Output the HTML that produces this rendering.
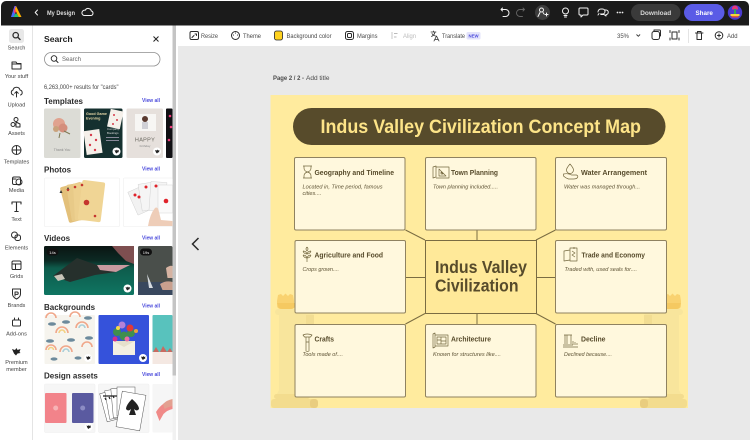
<!DOCTYPE html>
<html lang="en"><head><meta charset="utf-8"><title>Indus Valley Civilization Concept Map</title>
<style>
html,body{margin:0;padding:0;background:#fff;width:750px;height:440px;overflow:hidden}
svg{display:block;font-family:"Liberation Sans",sans-serif;filter:blur(.25px)}
.rl{font-size:5.6px;fill:#444;text-anchor:middle}
.ic{fill:none;stroke:#2c2c2c;stroke-width:1;stroke-linecap:round;stroke-linejoin:round}
.h{font-size:8px;font-weight:700;fill:#2c2c2c}
.va{font-size:5.6px;fill:#4b4bdc;font-weight:700}
.tb{font-size:6.2px;fill:#4a4a4a}
.bx{fill:#fff8dd;stroke:#8f8260;stroke-width:1}
.bh{font-size:7.4px;font-weight:700;fill:#574b2b}
.bt{font-size:5.4px;font-style:italic;fill:#5f5436}
.pi{fill:none;stroke:#74683f;stroke-width:.7;stroke-linejoin:round}
.cn{stroke:#7a6c42;stroke-width:1;fill:none}
.w{fill:none;stroke:#f4f4f4;stroke-width:1;stroke-linecap:round;stroke-linejoin:round}
</style></head><body>
<svg width="750" height="440" viewBox="0 0 750 440" xmlns="http://www.w3.org/2000/svg">
<defs><linearGradient id="tbl" x1="0" y1="0" x2="0" y2="1"><stop offset="0" stop-color="#0a1512"/><stop offset=".3" stop-color="#0c2a24"/><stop offset=".45" stop-color="#0e5c4c"/><stop offset="1" stop-color="#0f7562"/></linearGradient></defs>
<rect width="750" height="440" fill="#fff"/>
<!-- canvas -->
<rect x="178" y="46" width="572" height="394" fill="#e9e9e9"/>
<!-- top bar -->
<rect x="1" y="1" width="748" height="24.5" rx="5" fill="#1b1b1b"/>
<rect x="1" y="15" width="748" height="10.5" fill="#1b1b1b"/>
<path d="M11 17 L16 6 L21 17 L18.5 17 L16 11.5 L13.5 17 Z" fill="#ff3b6a"/>
<path d="M11 17 L13.5 11.5 L16 6 L14.5 6 Z" fill="#7a5cff"/>
<path d="M16 6 L21.5 17 L18.5 17 L15 9Z" fill="#ffb000"/>
<path d="M13 17 L16 13 L19 17 Z" fill="#25c26e"/>
<path d="M11 17 L13.5 11 L15 14 L13.5 17Z" fill="#3f6cff"/>
<path class="w" d="M37.5 10 L35.2 12.5 L37.5 15" stroke-width="1.2"/>
<text x="47" y="15" font-size="6.6" font-weight="700" fill="#ddd" textLength="28" lengthAdjust="spacingAndGlyphs">My Design</text>
<path class="w" d="M84 15.5 h7 a2.3 2.3 0 0 0 .3 -4.5 a3.2 3.2 0 0 0 -6 -.8 a2.7 2.7 0 0 0 -1.3 5.3z" stroke-width=".8"/>
<path class="w" d="M502.5 9.500 L501 8 L502.5 6.500 M501 8 H505.500 a3.500 3.500 0 0 1 0 7 H503" transform="translate(0,1.500)" stroke-width=".9"/>
<path d="M523 9.500 L524.500 8 L523 6.500 M524.500 8 H520 a3.500 3.500 0 0 0 0 7 H522.500" transform="translate(0,1.500)" fill="none" stroke="#666" stroke-width=".9" stroke-linecap="round"/>
<circle cx="542.5" cy="12.5" r="7.500" fill="#3d3d3d"/>
<circle cx="541.5" cy="10" r="2" class="w"/><path class="w" d="M538 16.5 L540 12.5 M543 12.5 L544 14 M545 14.5 h3 M546.5 13 v3"/>
<circle cx="565.5" cy="11" r="3" class="w"/><path class="w" d="M564 15.5 h3 M564.5 17 h2"/>
<path class="w" d="M580 8 h7 a1 1 0 0 1 1 1 v5 a1 1 0 0 1 -1 1 h-4 l-2 2 v-2 h-1 a1 1 0 0 1 -1 -1 v-5 a1 1 0 0 1 1 -1z"/>
<path class="w" d="M598 12 a3 3 0 0 1 3 -3 h1.5 a2.5 2.5 0 0 1 0 5 h-2 M605 10 h1 a2 2 0 0 1 0 4.5 v1.5 l-2 -1.5 h-3 M598 15 l1 -1.5"/>
<circle cx="617.5" cy="12.5" r=".9" fill="#eee"/><circle cx="620" cy="12.5" r=".9" fill="#eee"/><circle cx="622.5" cy="12.5" r=".9" fill="#eee"/>
<rect x="631" y="4" width="49.5" height="17" rx="8.5" fill="#3a3a3a"/>
<text x="655.7" y="15" font-size="6.6" font-weight="700" fill="#d8d8d8" text-anchor="middle" textLength="31" lengthAdjust="spacingAndGlyphs">Download</text>
<rect x="684" y="4" width="40.5" height="17" rx="8.5" fill="#5a5be6"/>
<text x="704.2" y="15" font-size="6.6" font-weight="700" fill="#fff" text-anchor="middle" textLength="17.5" lengthAdjust="spacingAndGlyphs">Share</text>
<circle cx="735" cy="12.5" r="7.200" fill="#4b3bd0"/>
<path d="M732 8.5 a3 3 0 0 1 6 0 v1 h-6z" fill="#e6387a"/><rect x="734" y="9" width="2" height="5" fill="#2ea85a"/><rect x="730.5" y="14" width="9" height="2" fill="#f4d23a"/><rect x="731.5" y="16" width="7" height="1.5" fill="#e65a3a"/>
<!-- left rail -->
<rect x="32" y="25.5" width="1" height="415" fill="#e4e4e4"/>
<rect x="9" y="29" width="15" height="14" rx="2.5" fill="#e8e8e8"/>
<g class="ic" stroke-width=".9">
<circle cx="15.7" cy="35.2" r="2.7" stroke-width="1.3"/><path d="M17.8 37.3 L20 39.5" stroke-width="1.4"/>
<path d="M12 62 h4 l1 1.5 h4 v5.5 h-9z M12 64 h9"/>
<path d="M13.5 95 a2.600 2.600 0 0 1 -.5 -5 a3.600 3.600 0 0 1 7 0 a2.600 2.600 0 0 1 .5 5 M16.500 97 v-5.500 l-1.800 1.800 M16.500 91.500 l1.800 1.800"/>
<circle cx="16" cy="119.5" r="2"/><circle cx="13" cy="124.5" r="2"/><path d="M16 122 l4 2 v3 h-4z"/>
<circle cx="16.5" cy="150" r="4.5"/><path d="M12 150 h9 M16.5 146 v8"/>
<rect x="12.5" y="177" width="8" height="7.5" rx="1.5"/><circle cx="19" cy="182" r="3"/><path d="M13 179 h3"/>
<path d="M16.5 211.5 v-9.5 M12 204 v-2 h9 v2 M14.8 211.5 h3.4" stroke-width="1.1"/>
<circle cx="14.5" cy="235" r="3"/><rect x="15" y="235" width="5.5" height="5.5" rx="2"/>
<rect x="12" y="261" width="9" height="8.5" rx="1.3"/><path d="M12 264 h9 M15.5 264 v5.5"/>
<path d="M12.5 289 h8 v5 q0 3 -4 5 q-4 -2 -4 -5z M15 296 v-4 h2 a1.2 1.2 0 0 1 0 2.4 h-2"/>
<rect x="12.5" y="320" width="8" height="6" rx="1"/><path d="M14.5 320 v-2 M18.5 320 v-2"/>
</g>
<path d="M12 349 l3 1 l1.5 -2 l1 2 l3 -1 l-1 3 l1 1 l-3 .5 l-1.5 2 l-2 -2 z" fill="#222"/>
<text class="rl" x="16.5" y="49.5">Search</text>
<text class="rl" x="16.5" y="78">Your stuff</text>
<text class="rl" x="16.5" y="106.5">Upload</text>
<text class="rl" x="16.5" y="135">Assets</text>
<text class="rl" x="16.5" y="163.5">Templates</text>
<text class="rl" x="16.5" y="192">Media</text>
<text class="rl" x="16.5" y="221">Text</text>
<text class="rl" x="16.5" y="249.5">Elements</text>
<text class="rl" x="16.5" y="278">Grids</text>
<text class="rl" x="16.5" y="307">Brands</text>
<text class="rl" x="16.5" y="335.5">Add-ons</text>
<text class="rl" x="16.5" y="364">Premium</text>
<text class="rl" x="16.5" y="371">member</text>
<!-- scrollbar -->
<rect x="172.5" y="25.5" width="3.5" height="415" fill="#f1f1f1"/>
<rect x="172.5" y="25.5" width="3.5" height="350" fill="#c4c4c4"/>
<!-- search panel -->
<text x="44" y="42" font-size="8.6" font-weight="700" fill="#1f1f1f">Search</text>
<path d="M153.5 36.5 l5 5 M158.5 36.5 l-5 5" stroke="#222" stroke-width="1"/>
<rect x="44.5" y="52.5" width="115.5" height="13.5" rx="6.7" fill="#fff" stroke="#8e8e8e" stroke-width=".8"/>
<circle cx="54" cy="58.5" r="2.8" fill="none" stroke="#222" stroke-width=".9"/><path d="M56 60.5 l2.3 2.3" stroke="#222" stroke-width="1"/>
<text x="62" y="61" font-size="6" fill="#666">Search</text>
<text x="44" y="89" font-size="6" fill="#444" textLength="74.5" lengthAdjust="spacingAndGlyphs">6,263,000+ results for "cards"</text>
<text class="h" x="44" y="104">Templates</text><text class="va" x="142" y="102" textLength="18" lengthAdjust="spacingAndGlyphs">View all</text>
<text class="h" x="44" y="172.5">Photos</text><text class="va" x="142" y="170.5" textLength="18" lengthAdjust="spacingAndGlyphs">View all</text>
<text class="h" x="44" y="241">Videos</text><text class="va" x="142" y="239.5" textLength="18" lengthAdjust="spacingAndGlyphs">View all</text>
<text class="h" x="44" y="310">Backgrounds</text><text class="va" x="142" y="307.5" textLength="18" lengthAdjust="spacingAndGlyphs">View all</text>
<text class="h" x="44" y="378.5">Design assets</text><text class="va" x="142" y="376" textLength="18" lengthAdjust="spacingAndGlyphs">View all</text>
<!-- template thumbs -->
<rect x="44" y="108.5" width="36.5" height="49.5" rx="1.5" fill="#dcdcd6"/>
<circle cx="59" cy="124" r="6" fill="#e0a28f"/><circle cx="63" cy="128" r="4.5" fill="#d48e7c"/><circle cx="56" cy="129" r="3" fill="#c9a27c"/><path d="M64 131 l6 3 M60 133 l-1 5" stroke="#7f7a55" stroke-width="1"/>
<text x="62" y="151" font-size="3.5" fill="#888" text-anchor="middle">Thank You</text>
<rect x="84" y="108.5" width="38.5" height="49.5" rx="1.5" fill="#15302f"/>
<text x="86" y="115" font-size="3.7" font-weight="700" fill="#e8d9a8">Good Game</text><text x="86" y="119.5" font-size="3.7" font-weight="700" fill="#e8d9a8">Evening</text>
<rect x="109" y="110" width="13" height="18" fill="#f5f0ea" transform="rotate(12 115 118)"/><circle cx="114" cy="115" r="1" fill="#d53a4a"/><circle cx="117" cy="120" r="1" fill="#d53a4a"/><circle cx="113" cy="124" r="1" fill="#d53a4a"/>
<rect x="85" y="130" width="16" height="24" fill="#f5f0ea" transform="rotate(-8 93 142)"/><circle cx="91" cy="135" r="1.2" fill="#d53a4a"/><circle cx="96" cy="140" r="1.2" fill="#d53a4a"/><circle cx="90" cy="145" r="1.2" fill="#d53a4a"/><circle cx="95" cy="150" r="1.2" fill="#d53a4a"/>
<text x="107" y="130" font-size="2.8" fill="#ddd">Company</text><text x="107" y="134" font-size="2.8" fill="#ddd">Bookings</text>
<rect x="106" y="137" width="13" height="1" fill="#889"/><rect x="106" y="140" width="13" height="1" fill="#889"/>
<rect x="126.5" y="108.5" width="36.5" height="49.5" rx="1.5" fill="#e6e0dc"/>
<rect x="135" y="114" width="21" height="17" fill="#f7f6f4"/><circle cx="145" cy="119" r="3" fill="#5a3a30"/><rect x="142" y="122" width="6" height="7" fill="#d0d0d6"/>
<text x="145" y="141.5" font-size="5.5" fill="#6a6860" text-anchor="middle" letter-spacing=".3">HAPPY</text>
<text x="145" y="147" font-size="3" fill="#888" text-anchor="middle">birthday</text>
<rect x="166" y="108.5" width="6.5" height="49.5" rx="1" fill="#101014"/>
<circle cx="170" cy="116" r="1.3" fill="#ee3a7a"/><circle cx="171" cy="127" r="1.3" fill="#ee3a7a"/><circle cx="169" cy="140" r="1.3" fill="#ee3a7a"/>
<!-- badges -->
<circle cx="116.5" cy="151.5" r="4" fill="#fff"/><path d="M114.5 150 l1.5 .5 l1 -1 l.5 1 l1.5 -.5 l-.5 1.5 l.5 .5 l-1.5 .5 l-1 1 l-1 -1 z" fill="#222"/>
<circle cx="157" cy="151.5" r="4" fill="#fff"/><path d="M155 150 l1.5 .5 l1 -1 l.5 1 l1.5 -.5 l-.5 1.5 l.5 .5 l-1.5 .5 l-1 1 l-1 -1 z" fill="#222"/>
<!-- photo thumbs -->
<rect x="44.5" y="178" width="75" height="48.5" rx="1" fill="#fff" stroke="#eee" stroke-width=".6"/>
<rect x="64" y="184" width="22" height="37" rx="2" fill="#e3c07a" transform="rotate(-15 75 202)"/>
<rect x="69" y="183" width="22" height="37" rx="2" fill="#e8ca88" transform="rotate(-9 80 202)"/>
<rect x="74" y="183" width="22" height="37" rx="2" fill="#edd08f" transform="rotate(-3 85 202)"/>
<rect x="80" y="181" width="23" height="40" rx="2" fill="#f0d595" transform="rotate(7 91 201)"/>
<path d="M61 190 l1.5 3 h-3z M68 187 l1.5 3 h-3z" fill="#333"/><circle cx="68" cy="190" r="1.2" fill="#c5352e"/><circle cx="75" cy="187" r="1.3" fill="#c5352e"/><circle cx="82" cy="185" r="1.3" fill="#c5352e"/>
<circle cx="86.5" cy="202.5" r="2.8" fill="#c5352e"/><circle cx="95" cy="216" r="1.3" fill="#c5352e"/>
<rect x="123.5" y="178" width="49" height="48.5" rx="1" fill="#fff" stroke="#eee" stroke-width=".6"/>
<rect x="132" y="188" width="16" height="25" fill="#f2f2f2" stroke="#ccc" stroke-width=".4" transform="rotate(-24 140 200)"/>
<rect x="140" y="183" width="16" height="27" fill="#f5f5f5" stroke="#ccc" stroke-width=".4" transform="rotate(-9 148 196)"/>
<rect x="150" y="182" width="16" height="29" fill="#f5f5f5" stroke="#ccc" stroke-width=".4" transform="rotate(4 158 196)"/>
<rect x="158" y="185" width="14.5" height="28" fill="#fafafa" stroke="#ccc" stroke-width=".4"/>
<circle cx="135" cy="195" r="1.5" fill="#e0232b"/><circle cx="139" cy="197" r="1.5" fill="#e0232b"/><circle cx="146" cy="187" r="1.5" fill="#e0232b"/><circle cx="156" cy="186" r="1.5" fill="#e0232b"/><circle cx="166" cy="201" r="2.3" fill="#e0232b"/>
<path d="M148 226 q2 -12 7 -18 q3 -2 4 4 l2 8 l11.5 1 v5z" fill="#eecdb8"/>
<!-- video thumbs -->
<rect x="44" y="246" width="90" height="49" rx="1.5" fill="url(#tbl)"/>
<path d="M53 276 L77 258 L97 265 L130 265 L116 272 L95 275 L70 282 Z" fill="#26302c"/>
<path d="M97 265 L130 265 L116 272 L100 270Z" fill="#c89aa0"/>
<path d="M112 246 h22 v18 l-8 -3 l-8 -8z" fill="#7e4f50"/>
<path d="M54 276 l8 -2 l3 5 l-7 2z" fill="#c9c4b8"/>
<rect x="46.5" y="248.5" width="12" height="7" rx="3.5" fill="#111"/><text x="52.5" y="253.8" font-size="4" fill="#eee" text-anchor="middle">14s</text>
<circle cx="127.5" cy="288.5" r="4" fill="#fff"/><path d="M125.5 287 l1.5 .5 l1 -1 l.5 1 l1.5 -.5 l-.5 1.5 l.5 .5 l-1.5 .5 l-1 1 l-1 -1 z" fill="#222"/>
<rect x="138" y="246" width="34.5" height="49" rx="1.5" fill="#4a4f4b"/>
<rect x="138" y="282" width="34.5" height="13" fill="#39485e"/>
<path d="M147 274 l6 14 h-4z" fill="#d6dbe0"/><path d="M160 284 q6 -4 12.5 -2 v8 h-10z" fill="#c9a08e"/><path d="M166 268 q4 -3 6.5 -2 v12 h-5z" fill="#d6b3a2"/>
<rect x="140" y="248.5" width="12" height="7" rx="3.5" fill="#111"/><text x="146" y="253.8" font-size="4" fill="#eee" text-anchor="middle">19s</text>
<!-- backgrounds -->
<rect x="44.5" y="315" width="50.5" height="49" rx="1" fill="#f6f4ee"/>
<g fill="none" stroke-width="1.6">
<path d="M46 318 a5 5 0 0 1 10 0" stroke="#f0a78a"/><path d="M70 317 a5 5 0 0 1 10 0" stroke="#f0a78a"/>
<path d="M56 333 a6 6 0 0 1 12 0" stroke="#f0a78a"/><path d="M59 333 a3 3 0 0 1 6 0" stroke="#f3d183"/>
<path d="M76 328 a6 6 0 0 1 12 0" stroke="#f0a78a"/><path d="M79 328 a3 3 0 0 1 6 0" stroke="#a9cfd8"/>
<path d="M46 350 a5 5 0 0 1 10 0" stroke="#f0a78a"/><path d="M48.5 350 a2.500 2.500 0 0 1 5 0" stroke="#f3d183"/>
<path d="M60 352 a6 6 0 0 1 12 0" stroke="#f0a78a"/><path d="M63 352 a3 3 0 0 1 6 0" stroke="#a9cfd8"/>
<path d="M82 347 a5 5 0 0 1 10 0" stroke="#f0a78a"/>
</g>
<g fill="#6c8a9c"><ellipse cx="52" cy="324" rx="4" ry="1.800"/><ellipse cx="66" cy="322" rx="4" ry="1.800"/><ellipse cx="88" cy="318" rx="4" ry="1.800"/><ellipse cx="71" cy="340" rx="4" ry="1.800"/><ellipse cx="89" cy="338" rx="4" ry="1.800"/><ellipse cx="50" cy="341" rx="4" ry="1.800"/><ellipse cx="78" cy="358" rx="3.500" ry="1.600"/><ellipse cx="54" cy="359" rx="3.500" ry="1.600"/></g>
<circle cx="88" cy="358" r="4" fill="#fff"/><path d="M86 356.5 l1.5 .5 l1 -1 l.5 1 l1.5 -.5 l-.5 1.5 l.5 .5 l-1.5 .5 l-1 1 l-1 -1 z" fill="#222"/>
<rect x="98.5" y="315" width="50.5" height="49" rx="1" fill="#3552db"/>
<rect x="113" y="341" width="22" height="14" fill="#f3efe2"/><path d="M113 341 l11 6 l11 -6z" fill="#e6e0cc"/>
<circle cx="117" cy="332" r="4" fill="#3f8f4e"/><circle cx="131" cy="333" r="4" fill="#3f8f4e"/><circle cx="124" cy="336" r="4.5" fill="#3f8f4e"/><circle cx="122" cy="325" r="3.5" fill="#b481d8"/><circle cx="130" cy="328" r="3.5" fill="#e23838"/><circle cx="115" cy="339" r="2.5" fill="#d42d8e"/><circle cx="127" cy="339" r="2.5" fill="#ec6fa3"/><circle cx="136" cy="331" r="2" fill="#e8a23a"/><circle cx="118" cy="328" r="2" fill="#f5d74a"/>
<circle cx="143" cy="358" r="4" fill="#fff"/><path d="M141 356.5 l1.5 .5 l1 -1 l.5 1 l1.5 -.5 l-.5 1.5 l.5 .5 l-1.5 .5 l-1 1 l-1 -1 z" fill="#222"/>
<rect x="152.5" y="315" width="20" height="49" rx="1" fill="#58c2bd"/>
<rect x="152.5" y="352" width="20" height="12" fill="#f4e8e2"/><path d="M153 352 l3 -5 l3 5 M160 352 l3 -6 l4 6 M167 352 l3 -4 l2.500 4" fill="#c96a60"/>
<!-- design assets -->
<rect x="44.5" y="384" width="50.5" height="48.5" rx="1" fill="#f6f6f6" stroke="#eee" stroke-width=".5"/>
<rect x="45" y="393" width="21.5" height="30" rx="1" fill="#f2838a"/><circle cx="55.7" cy="408" r="2.5" fill="#f7b3b6"/>
<rect x="72" y="393" width="21.5" height="30" rx="1" fill="#5a5aa0"/><circle cx="82.7" cy="408" r="2.5" fill="#8c8cc4"/>
<circle cx="88.5" cy="427" r="4" fill="#fff"/><path d="M86.5 425.5 l1.5 .5 l1 -1 l.5 1 l1.5 -.5 l-.5 1.5 l.5 .5 l-1.5 .5 l-1 1 l-1 -1 z" fill="#222"/>
<rect x="98.5" y="384" width="50.5" height="48.5" rx="1" fill="#f6f6f6" stroke="#eee" stroke-width=".5"/>
<g fill="#fff" stroke="#555" stroke-width=".5">
<rect x="103" y="391" width="18" height="29" transform="rotate(-15 112 405)"/><rect x="107" y="389" width="18" height="29" transform="rotate(-10 116 403)"/><rect x="112" y="388" width="18" height="29" transform="rotate(-5 121 402)"/><rect x="117" y="387" width="18" height="29"/>
<rect x="119" y="393" width="24" height="36" transform="rotate(10 131 411)"/></g>
<path d="M132 399 q-6 6 -6 10 q2 3 5 0 l-2 6 h7 l-2 -6 q3 3 5 0 q0 -4 -7 -10z" fill="#222"/>
<path d="M103 396 h14 M105 398 l1 2 M109 397 l1 2 M113 396 l1 2" stroke="#222" stroke-width="1.2"/>
<rect x="152.5" y="384" width="20" height="48.5" rx="1" fill="#f6f6f6"/>
<path d="M156 412 q6 -10 16.5 -12 v9 q-5 1 -9 5 l-4 7z" fill="#f08a88"/><path d="M163 404 q4 -4 9.5 -5 v7 q-5 1 -8 3z" fill="#e3a090"/>
<!-- toolbar icons -->
<g class="ic" stroke-width=".9">
<rect x="190" y="31.5" width="8.5" height="8" rx="1.5"/><path d="M192 37.5 l2 -2 M195 34 h1.5 v1.5"/>
<circle cx="235.5" cy="35.5" r="4"/><path d="M235.5 33 v.1 M233.5 35 v.1 M237.5 35 v.1"/>
<rect x="345.5" y="31.5" width="8" height="8" rx="2"/><rect x="347.5" y="33.5" width="4" height="4" rx="1"/>
<path d="M431 32 h5 M433.5 31 v1 M435 32 q-.5 3 -3.5 4.5 M432 33.5 q1 2 3.500 2.500 M434 41 l2.500 -5 l2.500 5 M434.8 39.5 h3.3" stroke-width=".8"/>
<rect x="652" y="31.5" width="7.5" height="8" rx="2"/><path d="M654 31 v-1 h5.5 a1 1 0 0 1 1 1 v5"/>
<path d="M672 32 h5 v7 h-5z M670 30.5 v2 M670 38 v2 M679 30.5 v2 M679 38 v2"/>
<path d="M695.5 33 h7.5 M697 33 v6.5 h4.5 v-6.500 M697.5 33 v-1.5 h3.5 v1.5"/>
<circle cx="719" cy="35.5" r="3.8"/><path d="M717.5 35.500 h3 M719 34 v3"/>
</g>
<path d="M392 32 v7" stroke="#bbb" stroke-width=".8"/><path d="M394 33.500 h3.500 M394 37 h2.500" stroke="#bbb" stroke-width="1"/>
<rect x="274.5" y="31" width="8" height="9" rx="2" fill="#ffd21f" stroke="#222" stroke-width=".8"/>
<text class="tb" x="201" y="38" textLength="17" lengthAdjust="spacingAndGlyphs">Resize</text>
<text class="tb" x="243" y="38" textLength="18" lengthAdjust="spacingAndGlyphs">Theme</text>
<text class="tb" x="286.5" y="38" textLength="45" lengthAdjust="spacingAndGlyphs">Background color</text>
<text class="tb" x="357" y="38" textLength="20.5" lengthAdjust="spacingAndGlyphs">Margins</text>
<text class="tb" x="403" y="38" style="fill:#bbb" textLength="13" lengthAdjust="spacingAndGlyphs">Align</text>
<text class="tb" x="442" y="38" textLength="23" lengthAdjust="spacingAndGlyphs">Translate</text>
<rect x="466.5" y="32" width="14" height="7.5" rx="1.5" fill="#e3e3fb"/>
<text x="473.5" y="37.7" font-size="4.3" font-weight="700" fill="#4b4bdc" text-anchor="middle">NEW</text>
<text class="tb" x="617" y="38" textLength="12" lengthAdjust="spacingAndGlyphs">35%</text>
<path d="M636.5 34.5 l1.800 1.800 l1.800 -1.800" fill="none" stroke="#333" stroke-width=".9"/>
<rect x="688" y="29" width=".8" height="14" fill="#ddd"/>
<text class="tb" x="727" y="38" textLength="10.5" lengthAdjust="spacingAndGlyphs">Add</text>
<!-- page label -->
<text x="273" y="80" font-size="6.2" font-weight="700" fill="#4a4a4a" textLength="31" lengthAdjust="spacingAndGlyphs">Page 2 / 2 -</text>
<text x="306" y="80" font-size="6.2" fill="#4a4a4a" textLength="23.5" lengthAdjust="spacingAndGlyphs">Add title</text>
<path d="M198.5 238 L192.5 244 L198.5 250" fill="none" stroke="#2a2a2a" stroke-width="1.5"/>
<!-- poster -->
<rect x="270.5" y="95" width="417.5" height="313" fill="#ffeb9e"/>
<!-- rooks -->
<g>
<path d="M277 301 l1 -6 l3 -1 l2 2 l2.500 -2.500 l2.500 2.500 l2 -2 l3 1 l1 6 v4 q0 4 -4 4 h-9 q-4 0 -4 -4z" fill="#f9d270"/>
<path d="M277 303 h18 v2 q0 4 -4 4 h-9 q-4 0 -4 -4z" fill="#f5c961"/>
<rect x="275" y="309" width="40" height="6" rx="3" fill="#f8e59c"/>
<path d="M279 315 h27 v75 l3 8 h-34 l4 -8z" fill="#f8e59c"/>
<rect x="306" y="315" width="8" height="9" fill="#f2dd92"/>
<rect x="274" y="394" width="36" height="5" rx="2.500" fill="#f3dc8e"/>
<rect x="271" y="399" width="43" height="9" rx="3" fill="#f3dc8e"/>
<rect x="310" y="399" width="8" height="9" rx="3" fill="#e9cd7f"/>
</g>
<g transform="translate(958,0) scale(-1,1)">
<path d="M277 301 l1 -6 l3 -1 l2 2 l2.500 -2.500 l2.500 2.500 l2 -2 l3 1 l1 6 v4 q0 4 -4 4 h-9 q-4 0 -4 -4z" fill="#f9d270"/>
<path d="M277 303 h18 v2 q0 4 -4 4 h-9 q-4 0 -4 -4z" fill="#f5c961"/>
<rect x="275" y="309" width="40" height="6" rx="3" fill="#f8e59c"/>
<path d="M279 315 h27 v75 l3 8 h-34 l4 -8z" fill="#f8e59c"/>
<rect x="306" y="315" width="8" height="9" fill="#f2dd92"/>
<rect x="274" y="394" width="36" height="5" rx="2.500" fill="#f3dc8e"/>
<rect x="271" y="399" width="43" height="9" rx="3" fill="#f3dc8e"/>
<rect x="310" y="399" width="8" height="9" rx="3" fill="#e9cd7f"/>
</g>
<!-- title -->
<rect x="293" y="108" width="372.5" height="37" rx="18.5" fill="#574b2b"/>
<text x="320.5" y="132.8" font-size="19.5" font-weight="700" fill="#fde488" textLength="320.5" lengthAdjust="spacingAndGlyphs">Indus Valley Civilization Concept Map</text>
<!-- connectors -->
<path class="cn" d="M405.5 230 L425 240 M477 230 V240 M536 240 L555.5 230 M405.5 277.5 H425 M536 277.5 H555.5 M425 313.5 L405.5 324 M477 313.5 V324 M536 313.5 L555.5 324"/>
<!-- boxes -->
<rect class="bx" x="294.5" y="157.5" width="110.5" height="72.5" rx="1.5"/>
<rect class="bx" x="425.5" y="157.5" width="110.5" height="72.5" rx="1.5"/>
<rect class="bx" x="555.5" y="157.5" width="111" height="72.5" rx="1.5"/>
<rect class="bx" x="295" y="240.5" width="110.5" height="72.5" rx="1.5"/>
<rect x="425.5" y="240.5" width="111" height="73" fill="#ffe999" stroke="#7a6c42" stroke-width="1"/>
<rect class="bx" x="555.5" y="240.5" width="111" height="72.5" rx="1.5"/>
<rect class="bx" x="295" y="324.5" width="110.5" height="72.5" rx="1.5"/>
<rect class="bx" x="425.5" y="324.5" width="110.5" height="72.5" rx="1.5"/>
<rect class="bx" x="555.5" y="324.5" width="111" height="72.5" rx="1.5"/>
<!-- center -->
<text x="435" y="273" font-size="17.5" font-weight="700" fill="#574b2b" textLength="92" lengthAdjust="spacingAndGlyphs">Indus Valley</text>
<text x="435" y="291.5" font-size="17.5" font-weight="700" fill="#574b2b" textLength="83.5" lengthAdjust="spacingAndGlyphs">Civilization</text>
<!-- box text -->
<text class="bh" x="314.5" y="175" textLength="79.5" lengthAdjust="spacingAndGlyphs">Geography and Timeline</text>
<text class="bt" x="302.5" y="188.5" textLength="80" lengthAdjust="spacingAndGlyphs">Located in, Time period, famous</text>
<text class="bt" x="302.5" y="194.8" textLength="19" lengthAdjust="spacingAndGlyphs">cities....</text>
<text class="bh" x="451" y="175" textLength="47" lengthAdjust="spacingAndGlyphs">Town Planning</text>
<text class="bt" x="433" y="188.5" textLength="65" lengthAdjust="spacingAndGlyphs">Town planning included.....</text>
<text class="bh" x="581" y="175" textLength="66" lengthAdjust="spacingAndGlyphs">Water Arrangement</text>
<text class="bt" x="564" y="188.5" textLength="76" lengthAdjust="spacingAndGlyphs">Water was managed through...</text>
<text class="bh" x="314.5" y="257.3" textLength="68.5" lengthAdjust="spacingAndGlyphs">Agriculture and Food</text>
<text class="bt" x="302.5" y="271" textLength="36.5" lengthAdjust="spacingAndGlyphs">Crops grown....</text>
<text class="bh" x="581.5" y="257.3" textLength="63.5" lengthAdjust="spacingAndGlyphs">Trade and Economy</text>
<text class="bt" x="564.5" y="270.8" textLength="72.5" lengthAdjust="spacingAndGlyphs">Traded with, used seals for....</text>
<text class="bh" x="314.5" y="341.5" textLength="19.5" lengthAdjust="spacingAndGlyphs">Crafts</text>
<text class="bt" x="302.5" y="356" textLength="40.5" lengthAdjust="spacingAndGlyphs">Tools made of....</text>
<text class="bh" x="451" y="341.5" textLength="40" lengthAdjust="spacingAndGlyphs">Architecture</text>
<text class="bt" x="433" y="356" textLength="68" lengthAdjust="spacingAndGlyphs">Known for structures like....</text>
<text class="bh" x="581" y="341.5" textLength="24.5" lengthAdjust="spacingAndGlyphs">Decline</text>
<text class="bt" x="564" y="356" textLength="48" lengthAdjust="spacingAndGlyphs">Declined because....</text>
<!-- poster icons -->
<g class="pi">
<path d="M303 166 h9 M303 178 h9 M304 166 v2 q0 3 3.5 4 q-3.5 1 -3.5 4 v2 M311 166 v2 q0 3 -3.5 4 q3.5 1 3.5 4 v2"/>
<path d="M433 167 l3 -1 v11 l-3 1z M436 167 h13 v11 h-13 M439 176 v-7 l7 7z M441 174 v-2 l2 2z"/>
<path d="M570 164 q-3.5 4 -3.5 6 a3.5 3.5 0 0 0 7 0 q0 -2 -3.5 -6z M563.5 174 q5 -1 8 1 h5 q2 1 1 2.5 q-1 1.5 -4 1.5 h-5 q-3 -1 -5 -3z"/>
<path d="M307 247 q-2 2 0 4 q2 -2 0 -4 M303 251 q1 3 4 3 q-1 -3 -4 -3 M311 251 q-1 3 -4 3 q1 -3 4 -3 M303 255 q1 3 4 3 q-1 -3 -4 -3 M311 255 q-1 3 -4 3 q1 -3 4 -3 M307 258 v4"/>
<path d="M564 251 l6 -1 v10 l-6 1z M570 248 h7 v13 h-7z M572 251 l3 2 l-3 2 l3 2 M574 247 v2"/>
<path d="M303 335 q4 -2 9 0 l-1.5 2 h-6z M306 337 v5 M309 337 v5 M306 342 h3 v9 q-1.5 1 -3 0z"/>
<path d="M433 334 l2 -1 v14 l-2 1z M435 335 h13 v11 h-13 M437 337 h9 v7 h-9z M441 337 v7 M437 340 h4 M441 341 h5"/>
<path d="M564 335 h8 M565 335 v9 M571 335 v9 M567 335 v9 M563 345 h10 M573 345 v-4 M575 345 v-3 M577 345 v-2 M563 347 h15"/>
</g>
</svg>
</body></html>
